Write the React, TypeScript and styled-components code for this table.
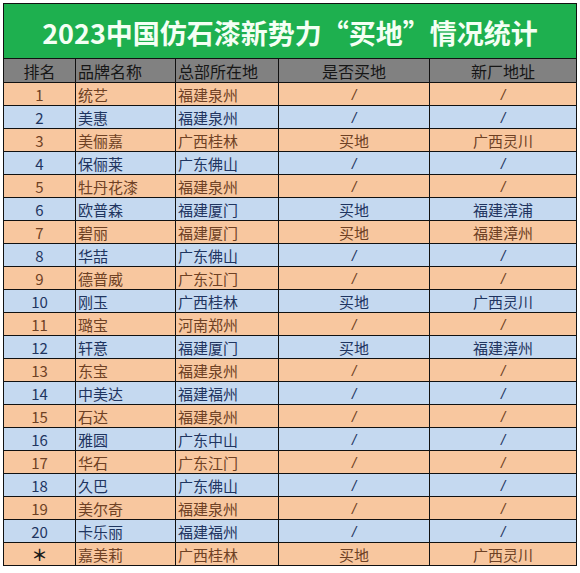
import React from "react";
import styled, { createGlobalStyle } from "styled-components";

const Global = createGlobalStyle`
  html, body { margin: 0; padding: 0; background: #ffffff; }
  body { padding: 3px; font-family: "Noto Sans CJK SC", "Noto Sans", sans-serif; }
`;

const Sheet = styled.div`
  display: grid;
  grid-template-columns: 72px 100px 103px 151px 147px;
  width: max-content;
  border-left: 1px solid #111;
  border-top: 1px solid #111;
`;

const Title = styled.div`
  grid-column: 1 / -1;
  height: 55px;
  background: #1eb04f;
  border-right: 1px solid #111;
  border-bottom: 1px solid #111;
  display: flex;
  align-items: center;
  justify-content: center;
  color: #f4fff4;
  font-size: 27px;
  font-weight: 700;
  padding-top: 2px;
  box-sizing: border-box;
`;

type Align = "center" | "left";

const HeadCell = styled.div<{ $align: Align }>`
  height: 23px;
  background: #818181;
  border-right: 1px solid #111;
  border-bottom: 1px solid #111;
  display: flex;
  align-items: center;
  justify-content: ${(p) => (p.$align === "center" ? "center" : "flex-start")};
  padding-left: ${(p) => (p.$align === "center" ? "0" : "2px")};
  color: #161616;
  font-size: 16px;
  line-height: 1;
`;

const Cell = styled.div<{ $align: Align; $tone: "orange" | "blue" }>`
  height: 22px;
  background: ${(p) => (p.$tone === "orange" ? "#f8c79f" : "#c5d9f0")};
  color: ${(p) => (p.$tone === "orange" ? "#6e4124" : "#1f3560")};
  border-right: 1px solid #111;
  border-bottom: 1px solid #111;
  display: flex;
  align-items: center;
  justify-content: ${(p) => (p.$align === "center" ? "center" : "flex-start")};
  padding-left: ${(p) => (p.$align === "center" ? "0" : "2px")};
  font-size: 15px;
  line-height: 1;
  white-space: nowrap;
  overflow: hidden;
`;

const Slash = styled.span`
  font-family: "Liberation Sans", sans-serif;
  font-style: italic;
  font-size: 15px;
`;

const Star = styled.span`
  font-weight: 700;
  font-size: 16px;
  color: #1a1a1a;
  line-height: 1;
`;

const rows: [string, string, string, string, string][] = [
  ["1", "统艺", "福建泉州", "/", "/"],
  ["2", "美惠", "福建泉州", "/", "/"],
  ["3", "美俪嘉", "广西桂林", "买地", "广西灵川"],
  ["4", "保俪莱", "广东佛山", "/", "/"],
  ["5", "牡丹花漆", "福建泉州", "/", "/"],
  ["6", "欧普森", "福建厦门", "买地", "福建漳浦"],
  ["7", "碧丽", "福建厦门", "买地", "福建漳州"],
  ["8", "华喆", "广东佛山", "/", "/"],
  ["9", "德普威", "广东江门", "/", "/"],
  ["10", "刚玉", "广西桂林", "买地", "广西灵川"],
  ["11", "璐宝", "河南郑州", "/", "/"],
  ["12", "轩意", "福建厦门", "买地", "福建漳州"],
  ["13", "东宝", "福建泉州", "/", "/"],
  ["14", "中美达", "福建福州", "/", "/"],
  ["15", "石达", "福建泉州", "/", "/"],
  ["16", "雅圆", "广东中山", "/", "/"],
  ["17", "华石", "广东江门", "/", "/"],
  ["18", "久巴", "广东佛山", "/", "/"],
  ["19", "美尔奇", "福建泉州", "/", "/"],
  ["20", "卡乐丽", "福建福州", "/", "/"],
  ["＊", "嘉美莉", "广西桂林", "买地", "广西灵川"],
];

const headers: [string, Align][] = [
  ["排名", "center"],
  ["品牌名称", "left"],
  ["总部所在地", "left"],
  ["是否买地", "center"],
  ["新厂地址", "center"],
];

const aligns: Align[] = ["center", "left", "left", "center", "center"];

const render = (v: string) => {
  if (v === "/") return <Slash>/</Slash>;
  if (v === "＊") return <Star>＊</Star>;
  return v;
};

export default function App() {
  return (
    <>
      <Global />
      <Sheet>
        <Title>2023中国仿石漆新势力“买地”情况统计</Title>
        {headers.map(([h, a]) => (
          <HeadCell key={h} $align={a}>
            {h}
          </HeadCell>
        ))}
        {rows.map((r, i) =>
          r.map((v, j) => (
            <Cell key={`${i}-${j}`} $align={aligns[j]} $tone={i % 2 === 0 ? "orange" : "blue"}>
              {render(v)}
            </Cell>
          ))
        )}
      </Sheet>
    </>
  );
}
